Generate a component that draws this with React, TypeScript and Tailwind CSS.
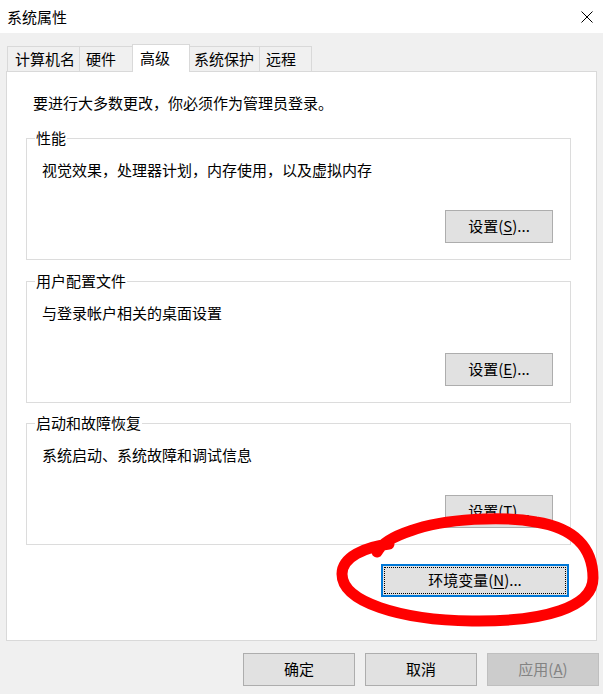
import React from "react";

function Btn({ children, w = "w-[108px]" }: { children: React.ReactNode; w?: string }) {
  return (
    <div className={`${w} h-[33px] bg-[#e1e1e1] border border-[#adadad] flex items-center justify-center text-black`}>
      {children}
    </div>
  );
}

function Group({ title, text, btn, className = "" }: { title: string; text: string; btn: React.ReactNode; className?: string }) {
  return (
    <div className={`relative w-[545px] h-[122px] border border-[#dcdcdc] flex flex-col pt-[21px] pl-[15px] pr-[17px] pb-[16px] ${className}`}>
      <span className="absolute left-[8px] top-[-11px] bg-white px-px leading-[20px]">{title}</span>
      <div className="leading-[20px]">{text}</div>
      <div className="flex-1" />
      <div className="self-end">{btn}</div>
    </div>
  );
}

export default function App() {
  return (
    <div className="relative w-[603px] h-[694px] bg-[#f0f0f0] flex flex-col text-[15px] text-black font-['Noto_Sans_CJK_SC',sans-serif] overflow-hidden">
      {/* Title bar */}
      <div className="h-[33px] bg-white flex items-center justify-between pl-[7px] pr-[10px] shrink-0">
        <span className="leading-[20px]">系统属性</span>
        <svg width="12" height="12" viewBox="0 0 12 12">
          <path d="M0.5 0.5 L11.5 11.5 M11.5 0.5 L0.5 11.5" stroke="#000" strokeWidth="1" />
        </svg>
      </div>

      {/* Tabs + panel */}
      <div className="px-[6px] pt-[11px] flex flex-col">
        <div className="relative z-10 flex items-end h-[28px] ml-px">
          <div className="w-[72px] h-[25px] mb-px border-l border-t border-[#d9d9d9] bg-[#f0f0f0] pl-[7px] flex items-center leading-[20px]">计算机名</div>
          <div className="w-[53px] h-[25px] mb-px border-l border-t border-[#d9d9d9] bg-[#f0f0f0] pl-[6px] flex items-center leading-[20px]">硬件</div>
          <div className="w-[58px] h-[28px] border-l border-t border-r border-[#d9d9d9] bg-white pl-[7px] pb-[2px] flex items-center leading-[20px]">高级</div>
          <div className="w-[69px] h-[25px] mb-px border-t border-[#d9d9d9] bg-[#f0f0f0] pl-[4px] flex items-center leading-[20px]">系统保护</div>
          <div className="w-[53px] h-[25px] mb-px border-l border-t border-r border-[#d9d9d9] bg-[#f0f0f0] pl-[6px] flex items-center leading-[20px]">远程</div>
        </div>
        <div className="-mt-px h-[570px] bg-white border border-[#d9d9d9] flex flex-col pl-[19px] pr-[24px] pt-[21px]">
          <div className="pl-[7px] leading-[20px]">要进行大多数更改，你必须作为管理员登录。</div>
          <div className="mt-[25px] flex flex-col">
            <Group
              title="性能"
              text="视觉效果，处理器计划，内存使用，以及虚拟内存"
              btn={<Btn>设置(<span className="underline underline-offset-2">S</span>)...</Btn>}
            />
            <Group
              className="mt-[21px]"
              title="用户配置文件"
              text="与登录帐户相关的桌面设置"
              btn={<Btn>设置(<span className="underline underline-offset-2">E</span>)...</Btn>}
            />
            <Group
              className="mt-[20px]"
              title="启动和故障恢复"
              text="系统启动、系统故障和调试信息"
              btn={<Btn>设置(<span className="underline underline-offset-2">T</span>)...</Btn>}
            />
          </div>
          <div className="mt-[19px] flex justify-end pr-[3px]">
            <div className="w-[188px] h-[33px] bg-[#e1e1e1] border-2 border-[#0078d7] p-px">
              <div className="w-full h-full border border-dotted border-black flex items-center justify-center">
                环境变量(<span className="underline underline-offset-2">N</span>)...
              </div>
            </div>
          </div>
        </div>
      </div>

      {/* Bottom buttons */}
      <div className="mt-[12px] flex justify-end gap-[10px] pr-[4px]">
        <Btn w="w-[112px]">确定</Btn>
        <Btn w="w-[112px]">取消</Btn>
        <div className="w-[112px] h-[33px] bg-[#cccccc] border border-[#bfbfbf] flex items-center justify-center text-[#838383]">
          应用(<span className="underline underline-offset-2">A</span>)
        </div>
      </div>

      {/* Red annotation */}
      <svg className="absolute left-0 top-0 pointer-events-none" width="603" height="694" viewBox="0 0 603 694">
        <path
          d="M 389 544 C 365 547, 342 557, 342 574 C 342 602, 400 620, 472 621 C 545 622, 593 607, 593 578 C 593 547, 574 528, 536 522 C 504 516, 445 518, 410 531 C 395 536, 382 543, 377 552"
          fill="none"
          stroke="#ff0000"
          strokeWidth="11"
          strokeLinecap="round"
          strokeLinejoin="round"
        />
      </svg>
    </div>
  );
}
